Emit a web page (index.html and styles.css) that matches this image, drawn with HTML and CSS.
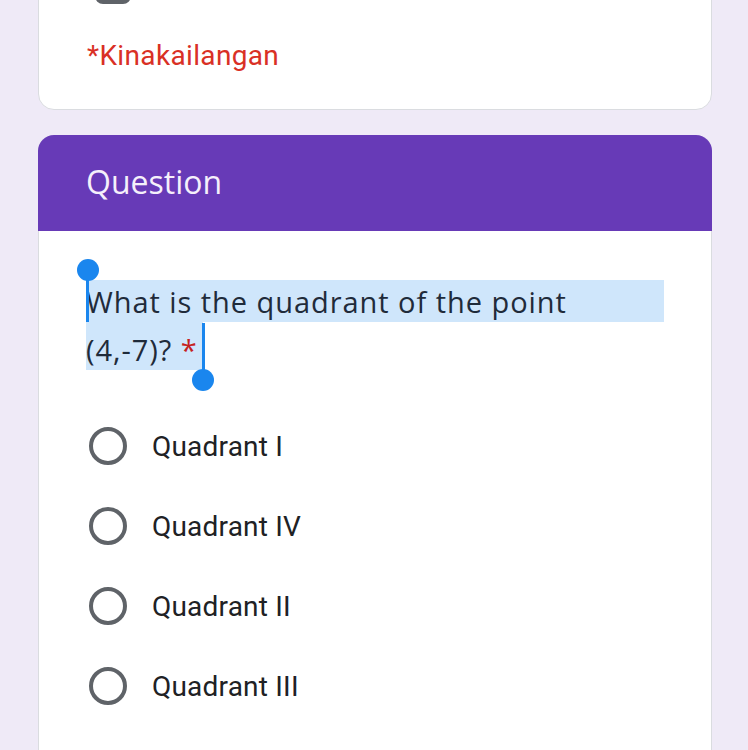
FILE: index.html
```html
<!DOCTYPE html>
<html>
<head>
<meta charset="utf-8">
<link rel="stylesheet" href="styles.css">
</head>
<body>
<div class="page">
  <div class="card card-top">
    <div class="grey-btn"></div>
    <div class="required">*Kinakailangan</div>
  </div>
  <div class="card card-q">
    <div class="q-header">Question</div>
    <div class="q-body">
      <div class="q-title">
        <div class="sel sel-full">What is the quadrant of the point</div>
        <div class="sel sel-part">(4,-7)? <span class="star">*</span><span class="handle handle-end"></span></div>
        <span class="handle handle-start"></span>
      </div>
      <div class="options">
        <label class="option"><span class="radio"></span><span class="opt-text">Quadrant I</span></label>
        <label class="option"><span class="radio"></span><span class="opt-text">Quadrant IV</span></label>
        <label class="option"><span class="radio"></span><span class="opt-text">Quadrant II</span></label>
        <label class="option"><span class="radio"></span><span class="opt-text">Quadrant III</span></label>
      </div>
    </div>
  </div>
</div>
</body>
</html>
```
FILE: styles.css
```css
html, body {
  margin: 0;
  padding: 0;
  background: #efeaf7;
  height: 750px;
  overflow: hidden;
}
.page {
  padding: 0 36px 0 38px;
  display: flex;
  flex-direction: column;
  gap: 25px;
}
.card {
  background: #ffffff;
  border: 1px solid #dadce0;
  border-radius: 16px;
}
.card-top {
  margin-top: -60px;
  height: 170px;
  display: flex;
  flex-direction: column;
  padding: 0 48px;
  box-sizing: border-box;
}
.grey-btn {
  margin-top: 23px;
  margin-left: 8px;
  width: 36px;
  height: 40px;
  border-radius: 8px;
  background: #5f6368;
}
.required {
  margin-top: 22px;
  font-family: Roboto, "Liberation Sans", sans-serif;
  font-size: 28px;
  line-height: 60px;
  color: #d93025;
  letter-spacing: 0.35px;
}
.card-q {
  border-top: none;
  border-bottom-left-radius: 0;
  border-bottom-right-radius: 0;
  height: 700px;
}
.q-header {
  background: #673ab7;
  height: 96px;
  margin: 0 -1px;
  border-radius: 16px 16px 0 0;
  color: #f5f0fb;
  font-family: "Open Sans", "Noto Sans", sans-serif;
  font-size: 32px;
  line-height: 94px;
  padding-left: 48px;
  box-sizing: border-box;
}
.q-body {
  padding: 49px 47px 0 47px;
}
.q-title {
  position: relative;
  font-family: "Open Sans", "Noto Sans", sans-serif;
  font-size: 29px;
  color: #1f2b3a;
  letter-spacing: 0.95px;
}
.sel {
  background: #cfe6fb;
}
.sel-full {
  height: 42px;
  line-height: 44px;
}
.sel-part {
  position: relative;
  display: inline-block;
  height: 48px;
  line-height: 56px;
  padding-right: 5px;
}
.star {
  color: #c5221f;
}
.handle {
  position: absolute;
  width: 3px;
  background: #1a86ee;
}
.handle::after {
  content: "";
  position: absolute;
  width: 22px;
  height: 22px;
  border-radius: 50%;
  background: #1a86ee;
  left: -9.5px;
}
.handle-start {
  left: 0;
  top: -10px;
  height: 52px;
}
.handle-start::after {
  top: -11px;
}
.handle-end {
  right: -2px;
  top: 1px;
  height: 57px;
}
.handle-end::after {
  bottom: -11px;
}
.options {
  margin-top: 36px;
  display: flex;
  flex-direction: column;
}
.option {
  display: flex;
  align-items: center;
  height: 80px;
  gap: 25px;
}
.radio {
  width: 38px;
  height: 38px;
  margin-left: 3px;
  box-sizing: border-box;
  border: 4px solid #5f6368;
  border-radius: 50%;
  flex: none;
}
.opt-text {
  font-family: Roboto, "Liberation Sans", sans-serif;
  font-size: 28px;
  color: #202124;
  letter-spacing: 0.2px;
}
```
